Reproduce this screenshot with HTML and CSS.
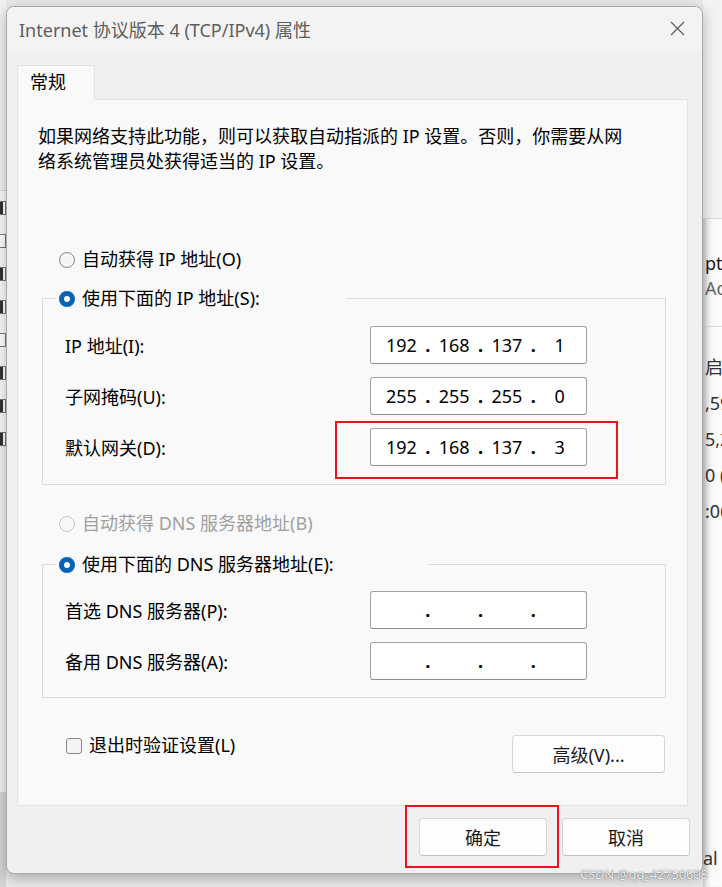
FILE: index.html
```html
<!DOCTYPE html>
<html lang="zh-CN">
<head>
    <meta charset="UTF-8">
    <title>Internet 协议版本 4 (TCP/IPv4) 属性</title>
    <link rel="stylesheet" href="styles.css">
</head>
<body>
    <!-- Janelas atrás do diálogo -->
    <div class="bg-left">
        <div class="bg-left-list">
            <span class="bg-check on"></span>
            <span class="bg-check"></span>
            <span class="bg-check on"></span>
            <span class="bg-check on"></span>
            <span class="bg-check"></span>
            <span class="bg-check on"></span>
            <span class="bg-check on"></span>
            <span class="bg-check on"></span>
        </div>
        <div class="bg-left-bottom"></div>
    </div>
    <div class="bg-right">
        <div class="bg-right-top"></div>
        <div class="bg-right-list">
            <div class="bg-name">pte</div>
            <div class="bg-sub">Ad</div>
            <div class="bg-rule"></div>
            <div class="bg-val first">启</div>
            <div class="bg-val">,59</div>
            <div class="bg-val">5,2</div>
            <div class="bg-val">0 (</div>
            <div class="bg-val">:06</div>
        </div>
        <div class="bg-val bg-bottom">al /</div>
    </div>

    <!-- Diálogo -->
    <div class="dialog">
        <div class="titlebar">
            <span class="title">Internet 协议版本 4 (TCP/IPv4) 属性</span>
            <svg class="close" width="15" height="15" viewBox="0 0 15 15">
                <path d="M1 1 L14 14 M14 1 L1 14" stroke="#5b5b5b" stroke-width="1.2" fill="none"/>
            </svg>
        </div>

        <div class="dialog-body">
            <div class="tabs">
                <div class="tab">常规</div>
            </div>

            <div class="panel">
                <p class="intro">如果网络支持此功能，则可以获取自动指派的 IP 设置。否则，你需要从网<br>络系统管理员处获得适当的 IP 设置。</p>

                <div class="option first-option">
                    <span class="radio"></span>
                    <span>自动获得 IP 地址(O)</span>
                </div>

                <fieldset class="group">
                    <legend class="option legend-ip">
                        <span class="radio checked"></span>
                        <span>使用下面的 IP 地址(S):</span>
                    </legend>
                    <div class="row">
                        <span class="row-label">IP 地址(I):</span>
                        <div class="ip">
                            <span>192</span><span class="dot">.</span><span>168</span><span class="dot">.</span><span>137</span><span class="dot">.</span><span>1</span>
                        </div>
                    </div>
                    <div class="row">
                        <span class="row-label">子网掩码(U):</span>
                        <div class="ip">
                            <span>255</span><span class="dot">.</span><span>255</span><span class="dot">.</span><span>255</span><span class="dot">.</span><span>0</span>
                        </div>
                    </div>
                    <div class="row">
                        <span class="row-label">默认网关(D):</span>
                        <div class="ip marked">
                            <span>192</span><span class="dot">.</span><span>168</span><span class="dot">.</span><span>137</span><span class="dot">.</span><span>3</span>
                        </div>
                    </div>
                </fieldset>

                <div class="option disabled dns-auto">
                    <span class="radio"></span>
                    <span>自动获得 DNS 服务器地址(B)</span>
                </div>

                <fieldset class="group group-dns">
                    <legend class="option legend-dns">
                        <span class="radio checked"></span>
                        <span>使用下面的 DNS 服务器地址(E):</span>
                    </legend>
                    <div class="row">
                        <span class="row-label">首选 DNS 服务器(P):</span>
                        <div class="ip">
                            <span></span><span class="dot">.</span><span></span><span class="dot">.</span><span></span><span class="dot">.</span><span></span>
                        </div>
                    </div>
                    <div class="row">
                        <span class="row-label">备用 DNS 服务器(A):</span>
                        <div class="ip">
                            <span></span><span class="dot">.</span><span></span><span class="dot">.</span><span></span><span class="dot">.</span><span></span>
                        </div>
                    </div>
                </fieldset>

                <div class="panel-footer">
                    <div class="option check-option">
                        <span class="checkbox"></span>
                        <span>退出时验证设置(L)</span>
                    </div>
                    <button class="btn btn-advanced">高级(V)...</button>
                </div>
            </div>

            <div class="actions">
                <button class="btn marked-btn">确定</button>
                <button class="btn">取消</button>
            </div>
        </div>
    </div>

    <div class="watermark">CSDN @qq_42750608</div>
</body>
</html>
```

FILE: styles.css
```css
/* Estilos gerais */
body {
    margin: 0;
    padding: 6px 0 0 6px;
    width: 722px;
    height: 887px;
    box-sizing: border-box;
    overflow: hidden;
    position: relative;
    background-color: #e9e9e9;
    font-family: "Noto Sans", "Noto Sans CJK SC", sans-serif;
    font-size: 18px;
    color: #1a1a1a;
}

/* Janela atrás, à esquerda */
.bg-left {
    position: absolute;
    left: 0;
    top: 0;
    width: 6px;
    height: 887px;
    background-color: #f2f2f2;
}

.bg-left-list {
    margin-top: 190px;
    padding-top: 10px;
    border-top: 1px solid #d8d8d8;
    border-bottom: 1px solid #d8d8d8;
    height: 245px;
    background-color: #fafafa;
}

.bg-check {
    display: block;
    width: 5px;
    height: 12px;
    margin-bottom: 19px;
    border: 1px solid #777;
    border-left: none;
    background-color: #fff;
}

.bg-check.on {
    background-color: #333;
    box-shadow: inset -2px 0 0 #fff;
}

.bg-left-bottom {
    margin-top: 345px;
    height: 120px;
    background-color: #d4d4d4;
}

/* Janela atrás, à direita */
.bg-right {
    position: absolute;
    left: 703px;
    top: 0;
    width: 19px;
    height: 887px;
    background-color: #fbfbfb;
    overflow: hidden;
    white-space: nowrap;
    box-shadow: inset 6px 0 6px -4px rgba(0, 0, 0, 0.25);
}

.bg-right-top {
    height: 218px;
    background-color: #f3f3f3;
    border-bottom: 1px solid #dcdcdc;
}

.bg-right-list {
    padding-left: 2px;
}

.bg-name {
    margin-top: 31px;
    line-height: 26px;
    color: #1a1a1a;
}

.bg-sub {
    line-height: 24px;
    color: #666;
}

.bg-rule {
    margin-top: 26px;
    margin-left: -2px;
    border-top: 1px solid #dcdcdc;
}

.bg-val {
    line-height: 36px;
    color: #333;
}

.bg-val.first {
    margin-top: 22px;
}

.bg-bottom {
    position: absolute;
    top: 840px;
    left: 0;
}

/* Diálogo */
.dialog {
    position: relative;
    width: 697px;
    box-sizing: border-box;
    border: 1px solid #a9a9a9;
    border-radius: 8px;
    background-color: #f0f0f0;
    box-shadow: 0 4px 14px rgba(0, 0, 0, 0.28);
    overflow: hidden;
}

.titlebar {
    height: 46px;
    display: flex;
    align-items: center;
    justify-content: space-between;
    padding: 0 17px 0 12px;
    background-color: #f3f3f3;
}

.title {
    color: #5e5e5e;
    font-size: 18px;
    margin-top: -3px;
}

.close {
    margin-top: -3px;
}

.dialog-body {
    padding: 12px 12px 17px 10px;
}

/* Aba */
.tabs {
    display: flex;
}

.tab {
    width: 78px;
    height: 35px;
    box-sizing: border-box;
    padding: 4px 0 0 12px;
    background-color: #f9f9f9;
    border: 1px solid #e2e2e2;
    border-bottom: none;
    color: #000;
    line-height: 25px;
    position: relative;
    margin-bottom: -1px;
}

.panel {
    width: 671px;
    box-sizing: border-box;
    background-color: #f9f9f9;
    border: 1px solid #e2e2e2;
    padding: 24px 22px 32px 0;
}

.intro {
    margin: 0 0 0 20px;
    line-height: 25px;
    color: #000;
}

/* Botões de opção */
.option {
    display: flex;
    align-items: center;
    gap: 7px;
    line-height: 25px;
    color: #000;
}

.first-option {
    margin: 73px 0 0 41px;
}

.dns-auto {
    margin: 26px 0 0 41px;
}

.option.disabled {
    color: #a0a0a0;
}

.radio {
    width: 16px;
    height: 16px;
    box-sizing: border-box;
    border-radius: 50%;
    border: 1px solid #858585;
    background-color: #f4f4f4;
    flex-shrink: 0;
}

.disabled .radio {
    border-color: #c9c9c9;
    background-color: #f7f7f7;
}

.radio.checked {
    border: 5px solid #0063b8;
    background-color: #fff;
}

.checkbox {
    width: 16px;
    height: 16px;
    box-sizing: border-box;
    border: 1px solid #858585;
    border-radius: 3px;
    background-color: #f4f4f4;
    flex-shrink: 0;
}

/* Grupos */
.group {
    margin: 14px 0 0 24px;
    width: 624px;
    box-sizing: border-box;
    padding: 15px 0 18px 0;
    border: 1px solid #dcdcdc;
}

.group-dns {
    margin-top: 16px;
    padding-top: 14px;
    padding-bottom: 17px;
}

.legend-ip,
.legend-dns {
    margin-left: 13px;
    padding: 0 0 0 3px;
    box-sizing: border-box;
}

.legend-ip {
    width: 290px;
}

.legend-dns {
    width: 373px;
}

.row {
    display: flex;
    align-items: center;
    justify-content: space-between;
    margin: 0 78px 13px 22px;
}

.row:last-child {
    margin-bottom: 0;
}

.row-label {
    color: #000;
}

/* Campo de endereço IP */
.ip {
    width: 217px;
    height: 38px;
    box-sizing: border-box;
    padding: 0 3px 0 7px;
    border: 1px solid #a2a2a2;
    border-bottom-color: #8d8d8d;
    border-radius: 3px;
    background-color: #fff;
    display: grid;
    grid-template-columns: 1fr 6px 1fr 6px 1fr 6px 1fr;
    align-items: center;
    text-align: center;
    color: #000;
    line-height: 25px;
}

.ip .dot {
    font-weight: bold;
}

/* Realce vermelho */
.marked,
.marked-btn {
    position: relative;
}

.marked::after,
.marked-btn::after {
    content: "";
    position: absolute;
    border: 2px solid #e8141c;
}

.marked::after {
    top: -8px;
    bottom: -14px;
    left: -36px;
    right: -32px;
}

.marked-btn::after {
    top: -14px;
    bottom: -13px;
    left: -15px;
    right: -13px;
}

/* Rodapé do painel */
.panel-footer {
    display: flex;
    justify-content: space-between;
    align-items: flex-start;
    margin: 35px 0 0 48px;
}

.check-option {
    gap: 7px;
}

.btn {
    height: 38px;
    box-sizing: border-box;
    border: 1px solid #d6d6d6;
    border-bottom-color: #c2c2c2;
    border-radius: 4px;
    background-color: #fdfdfd;
    font-family: inherit;
    font-size: 18px;
    color: #1a1a1a;
    padding: 0;
}

.btn-advanced {
    width: 153px;
    margin-top: 2px;
}

.actions {
    display: flex;
    justify-content: flex-end;
    gap: 15px;
    margin-top: 12px;
}

.actions .btn {
    width: 128px;
}

/* Marca d'água */
.watermark {
    position: absolute;
    left: 580px;
    top: 865px;
    font-size: 13px;
    color: rgba(255, 255, 255, 0.9);
    text-shadow: 0 0 1px #777, 0 0 1px #777;
    letter-spacing: -0.2px;
}
```
